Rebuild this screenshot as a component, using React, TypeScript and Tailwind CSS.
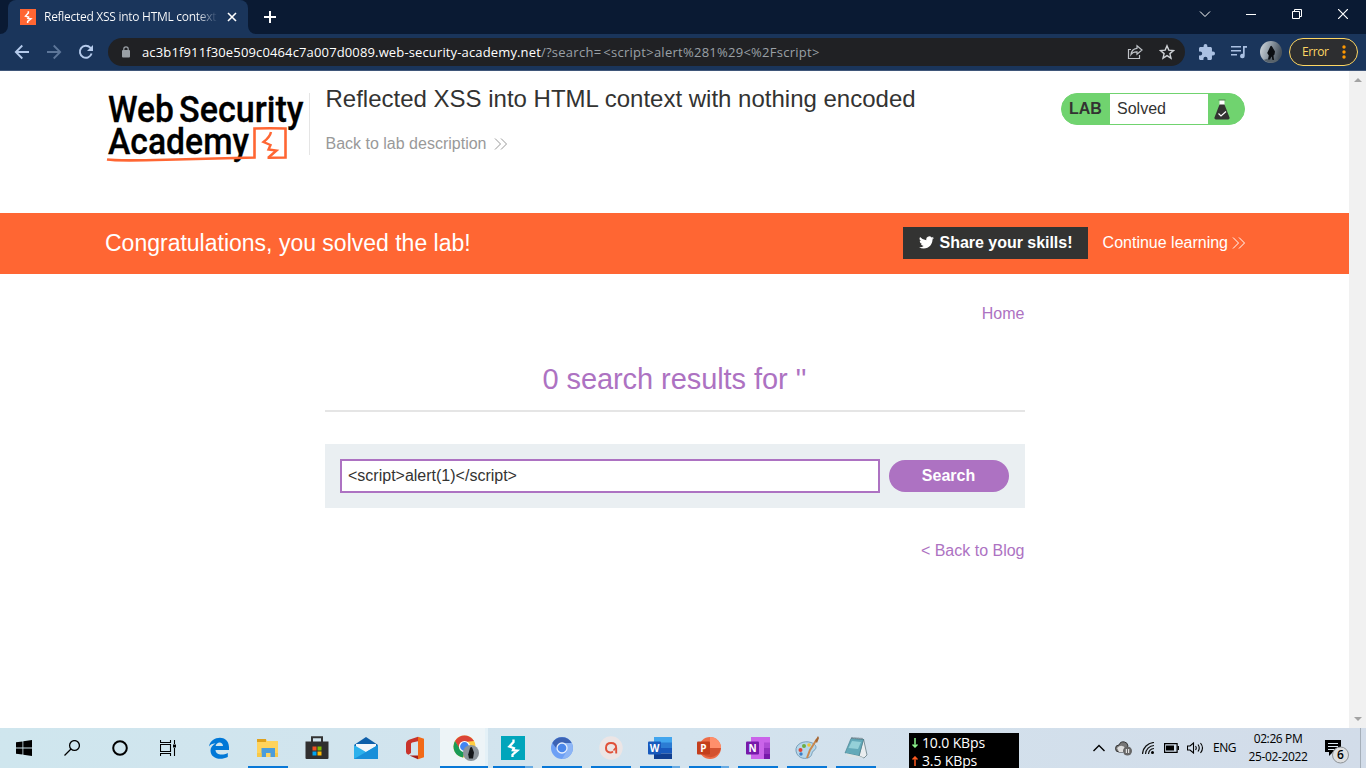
import React from "react";

function Burp({ className, bg }: { className: string; bg: string }) {
  return (
    <svg className={className} viewBox="0 0 24 24">
      <rect width="24" height="24" fill={bg} />
      <path d="M12.500 3.500V6L8.300 10.600l4.600 1.600-1 2 4.400.5-4.800 4V21" fill="none" stroke="#fff" strokeWidth="2.300" />
    </svg>
  );
}

function Chevrons({ className }: { className: string }) {
  return (
    <svg className={className} viewBox="0 0 14 14" fill="none" stroke="currentColor" strokeWidth="1">
      <path d="M1 1.500l5.500 5.500L1 12.500M7 1.500l5.500 5.500L7 12.500" />
    </svg>
  );
}

function Avatar({ className }: { className: string }) {
  return (
    <svg className={className} viewBox="0 0 22 22">
      <defs>
        <linearGradient id="sky" x1="0" x2="1" y1="0" y2="0.3">
          <stop offset="0" stopColor="#d5dce2" />
          <stop offset="0.5" stopColor="#909ba5" />
          <stop offset="1" stopColor="#48535e" />
        </linearGradient>
      </defs>
      <circle cx="11" cy="11" r="11" fill="url(#sky)" />
      <path d="M3.500 19Q11 15.500 18.500 19Q11 24.500 3.500 19z" fill="#59636b" />
      <path d="M9.800 6.500Q11 3 12.700 6.500L15 10.500 14.500 13.500 13.500 14.500 14 19H12.500L11.500 15.500 10 18.500H8L8.800 14.500 7.200 12z" fill="#0b0e12" />
    </svg>
  );
}

function TabStrip() {
  return (
    <div className="flex h-[34px] bg-[#0a1a33] pl-2 text-white">
      <div className="relative flex h-[34px] w-[240px] items-center rounded-t-lg bg-[#1a355b] pl-3">
        <svg className="absolute bottom-0 -left-2 h-2 w-2" viewBox="0 0 8 8"><path d="M8 0v8H0a8 8 0 0 0 8-8" fill="#1a355b" /></svg>
        <svg className="absolute -right-2 bottom-0 h-2 w-2" viewBox="0 0 8 8"><path d="M0 0v8h8a8 8 0 0 1-8-8" fill="#1a355b" /></svg>
        <Burp className="h-4 w-4 shrink-0" bg="#ff6633" />
        <span className="ml-2 w-[174px] overflow-hidden bg-gradient-to-r from-white from-88% to-[#1a355b] bg-clip-text text-[12px] tracking-[-0.28px] whitespace-nowrap text-transparent">
          Reflected XSS into HTML context
        </span>
        <svg className="ml-[9px] h-[10px] w-[10px]" viewBox="0 0 10 10" stroke="#fff" strokeWidth="1.600"><path d="M1 1l8 8M9 1L1 9" /></svg>
      </div>
      <svg className="mt-[11px] ml-4 h-3 w-3" viewBox="0 0 12 12" stroke="#fff" strokeWidth="2"><path d="M6 0v12M0 6h12" /></svg>
      <svg className="mt-[9px] ml-auto h-[10px] w-[12px]" viewBox="0 0 12 10" fill="none" stroke="#fff" strokeWidth="1"><path d="M1 2.500l5 5 5-5" /></svg>
      <svg className="mt-[9px] ml-[35px] h-[10px] w-[10px]" viewBox="0 0 10 10" stroke="#fff"><path d="M0 5.500h10" /></svg>
      <svg className="mt-[9px] ml-[36px] h-[10px] w-[10px]" viewBox="0 0 10 10" fill="none" stroke="#fff"><path d="M.5 2.500h7v7h-7zM2.500 2.500v-2h7v7h-2" /></svg>
      <svg className="mt-[9px] mr-[18px] ml-[36px] h-[10px] w-[10px]" viewBox="0 0 10 10" stroke="#fff" strokeWidth="1.200"><path d="M0 0l10 10M10 0L0 10" /></svg>
    </div>
  );
}

function Toolbar() {
  return (
    <div className="flex h-[37px] items-center border-b border-[#3f5679] bg-[#1a355b] pl-[14px]">
      <svg className="h-4 w-4" viewBox="0 0 16 16" fill="none" stroke="#b5cbec" strokeWidth="1.800"><path d="M15 8H2M8.300 1.500L1.800 8l6.500 6.500" /></svg>
      <svg className="ml-4 h-4 w-4" viewBox="0 0 16 16" fill="none" stroke="#5d7699" strokeWidth="1.800"><path d="M1 8h13M7.700 1.500L14.200 8l-6.500 6.500" /></svg>
      <svg className="ml-4 h-4 w-4" viewBox="0 0 16 16" fill="none" stroke="#b5cbec" strokeWidth="1.900"><path d="M13.600 9.500A6 6 0 1 1 12.300 3.700L14 5.500" /><path d="M15 1v6H9z" fill="#b5cbec" stroke="none" /></svg>
      <div className="ml-[14px] flex h-7 w-[1077px] items-center rounded-full bg-[#202124] pl-[14px]">
        <svg className="h-3 w-2 shrink-0" viewBox="0 0 8 12"><rect y="4" width="8" height="7.500" rx="1" fill="#9aa0a6" /><path d="M1.800 5V3a2.200 2.200 0 0 1 4.400 0v2" fill="none" stroke="#9aa0a6" strokeWidth="1.200" /></svg>
        <span className="ml-3 w-[982px] pt-px text-[13px] whitespace-nowrap text-white">
          <span className="tracking-[0.14px]">ac3b1f911f30e509c0464c7a007d0089.web-security-academy.net</span>
          <span className="tracking-[0.26px] text-[#9aa0a6]">/?search=<span className="ml-[2px]">&lt;script&gt;alert%281%29&lt;%2Fscript&gt;</span></span>
        </span>
        <svg className="ml-[3px] h-4 w-4 shrink-0" viewBox="0 0 16 16" fill="none" stroke="#bfc3c8" strokeWidth="1.200"><path d="M4 5.500H1.500v9h11V11M10 1.800l5 4.200-5 4.200V7.800Q6 7.600 4 10.500 4.500 5 10 4.300z" /></svg>
        <svg className="ml-4 h-4 w-4 shrink-0" viewBox="0 0 16 16" fill="none" stroke="#cfd2d6" strokeWidth="1.400"><path d="M8 1.800l1.800 4.300 4.700.4-3.600 3.100 1.100 4.600L8 11.700l-4 2.500 1.100-4.600L1.500 6.500l4.700-.4z" /></svg>
      </div>
      <svg className="ml-[14px] h-4 w-4" viewBox="2 1 21 21" fill="#aac0e2"><path d="M20.500 11H19V7c0-1.100-.9-2-2-2h-4V3.500a2.500 2.500 0 0 0-5 0V5H4c-1.100 0-2 .9-2 2v3.800h1.500a2.700 2.700 0 0 1 0 5.400H2V20c0 1.100.9 2 2 2h3.800v-1.500a2.700 2.700 0 0 1 5.400 0V22H17c1.100 0 2-.9 2-2v-4h1.500a2.500 2.500 0 0 0 0-5z" /></svg>
      <svg className="ml-4 h-4 w-4" viewBox="0 0 16 16" fill="#aac0e2"><path d="M0 2h10v1.500H0zM0 6h10v1.500H0zM0 10h6v1.500H0zM12 2h4v1.700h-2.300V12a2.300 2.300 0 1 1-1.700-2.200z" /></svg>
      <Avatar className="ml-[13px] h-[22px] w-[22px]" />
      <div className="ml-[7px] flex h-7 w-[69px] items-center rounded-full border border-[#fdd663] bg-[#2d2e30] pl-3 text-[12px] text-[#fdd663]">
        <span className="w-[27px] tracking-[-0.4px]">Error</span>
        <svg className="ml-[13px] h-4 w-1" viewBox="0 0 4 16" fill="#ff9800"><circle cx="2" cy="3" r="1.700" /><circle cx="2" cy="8" r="1.700" /><circle cx="2" cy="13" r="1.700" /></svg>
      </div>
    </div>
  );
}

function AcademyLogo() {
  return (
    <svg className="h-[72px] w-[200px] shrink-0" viewBox="0 0 200 72">
      <g fill="#000" stroke="#000" strokeWidth="0.300" fontFamily="Roboto, sans-serif" fontWeight="500">
        <text x="2" y="30.500" fontSize="37" textLength="66" lengthAdjust="spacingAndGlyphs">Web</text>
        <text x="73" y="30.500" fontSize="37" textLength="124.500" lengthAdjust="spacingAndGlyphs">Security</text>
        <text x="2" y="63" fontSize="36" textLength="141" lengthAdjust="spacingAndGlyphs">Academy</text>
      </g>
      <path d="M1 68.500Q10 70 60 68.800L148.500 66.500V37.500Q164 37 179.500 37.500V66.500L161.500 66.800" fill="none" stroke="#ff6633" strokeWidth="2.600" />
      <path d="M165 41Q164 46 157.500 51L164.500 54 162.500 58.500 170.500 59.500 162.500 66.500" fill="none" stroke="#ff6633" strokeWidth="2.400" />
    </svg>
  );
}

function LabStatus() {
  return (
    <div className="mt-[22px] flex h-8 w-[184px] items-center overflow-hidden rounded-full border border-[#70d36f] bg-[#70d36f] text-[16px] text-[#333332]">
      <span className="w-12 pl-[7px] font-bold">LAB</span>
      <span className="flex h-[30px] w-[98px] items-center bg-white pl-[7px]">Solved</span>
      <svg className="ml-[6px] h-[21px] w-4" viewBox="0 0 16 21">
        <path d="M5.500 1h5v6h-5z" fill="#fff" />
        <path d="M4.500 1h7" stroke="#4d7d4c" />
        <path d="M5.500 5.500h5l5 13q.5 2-1.500 2h-12q-2 0-1.500-2z" fill="#333332" />
        <path d="M4.500 14.500l2.500 2.500 5-4.500" fill="none" stroke="#fff" strokeWidth="1.200" />
      </svg>
    </div>
  );
}

function Page() {
  return (
    <div className="flex h-[657px] bg-white font-['Liberation_Sans',Arial,sans-serif] text-[16px]">
      <main className="w-[1349px]">
        <header className="flex h-[142px] pl-[106px]">
          <div className="flex h-[92px] w-[203px] items-end"><AcademyLogo /></div>
          <div className="mt-[22px] h-[62px] w-px bg-[#e5e5e5]" />
          <div className="w-[736px] pt-[14px] pl-[15.500px]">
            <h2 className="text-[24px] leading-7 whitespace-nowrap text-[#333332]">Reflected XSS into HTML context with nothing encoded</h2>
            <div className="mt-[21px] flex items-center text-[#999]">
              <span className="leading-5">Back to lab description</span>
              <Chevrons className="ml-2 h-[14px] w-[14px]" />
            </div>
          </div>
          <div className="ml-[15px]"><LabStatus /></div>
        </header>
        <section className="flex h-[61px] items-center bg-[#ff6633] pr-[103px] pb-[2px] pl-[105px] text-white">
          <h4 className="text-[23px] leading-7">Congratulations, you solved the lab!</h4>
          <div className="ml-auto flex h-8 w-[185px] items-center bg-[#333332] pl-4 font-bold">
            <svg className="h-[15px] w-[15px]" viewBox="0 2 24 20" fill="#fff"><path d="M23.950 4.600a10 10 0 0 1-2.800.8 4.900 4.900 0 0 0 2.200-2.700c-1 .6-2 1-3.200 1.200a4.900 4.900 0 0 0-8.400 4.500A14 14 0 0 1 1.700 3.200a4.900 4.900 0 0 0 1.500 6.500 4.900 4.900 0 0 1-2.200-.6v.1a4.900 4.900 0 0 0 4 4.800 5 5 0 0 1-2.200.1 4.900 4.900 0 0 0 4.600 3.400A9.900 9.900 0 0 1 0 19.500a14 14 0 0 0 7.600 2.200c9 0 14-7.500 14-14v-.6a10 10 0 0 0 2.400-2.500z" /></svg>
            <span className="ml-[6px] tracking-[-0.03px]">Share your skills!</span>
          </div>
          <span className="ml-[15px] whitespace-nowrap">Continue learning</span>
          <Chevrons className="ml-1 h-[14px] w-[14px]" />
        </section>
        <div className="mx-auto flex w-[700px] flex-col pt-[30px] text-[#ad72c2]">
          <div className="text-right leading-5">Home</div>
          <h1 className="mt-[39px] h-[49px] border-b-2 border-[#e5e5e5] text-center text-[29px] leading-8 tracking-[-0.07px]">0 search results for ''</h1>
          <div className="mt-8 flex h-16 items-center bg-[#eaeff2] px-[15px]">
            <div className="flex h-[34px] w-[540px] items-center border-2 border-[#ad72c2] bg-white pl-[6.500px] text-[#333332]">&lt;script&gt;alert(1)&lt;/script&gt;</div>
            <div className="ml-[9px] flex h-8 w-[120px] items-center justify-center rounded-full bg-[#ad72c2] font-bold text-white">Search</div>
          </div>
          <div className="mt-[33px] text-right leading-5">&lt; Back to Blog</div>
        </div>
      </main>
      <div className="flex w-[17px] flex-col items-center justify-between bg-[#f1f1f1] py-[7px]">
        <svg className="h-1 w-2" viewBox="0 0 8 4" fill="#a3a3a3"><path d="M0 4l4-4 4 4z" /></svg>
        <svg className="h-1 w-2" viewBox="0 0 8 4" fill="#a3a3a3"><path d="M0 0l4 4 4-4z" /></svg>
      </div>
    </div>
  );
}

function Glyph({ children }: { children: React.ReactNode }) {
  return <svg className="h-6 w-6" viewBox="0 0 24 24">{children}</svg>;
}

function Task({ children, bar = "none" }: { children: React.ReactNode; bar?: "none" | "one" | "many" }) {
  return (
    <div className="flex h-10 w-[49px] flex-col items-start pl-1">
      <div className="flex h-[38px] w-10 items-center justify-center pt-[2px]">{children}</div>
      {bar !== "none" && (
        <div className="flex h-[2px] w-10">
          <div className="flex-1 bg-[#0878d7]" />
          {bar === "many" && <div className="w-2 bg-[#65aae3]" />}
        </div>
      )}
    </div>
  );
}

function OfficeTile({ letter, color }: { letter: string; color: string }) {
  return (
    <>
      <rect x="0" y="5.500" width="13" height="13" rx="1" fill={color} />
      <text x="6.500" y="15.700" textAnchor="middle" fill="#fff" fontFamily="Open Sans, sans-serif" fontSize="10" fontWeight="700">{letter}</text>
    </>
  );
}

function Taskbar() {
  return (
    <footer className="flex h-10 bg-gradient-to-r from-[#cfe6ee] via-[#d3e3ee] to-[#d2dce9] text-black">
      <div className="flex w-[195px] items-center">
        <svg className="ml-4 h-4 w-4" viewBox="0 0 16 16"><path d="M0 2.300l6.500-.9v6.200H0zM7.300 1.300L16 0v7.600H7.300zM0 8.400h6.500v6.200L0 13.700zM7.300 8.400H16V16l-8.700-1.300z" /></svg>
        <svg className="ml-8 h-4 w-4" viewBox="0 0 16 16" fill="none" stroke="#000" strokeWidth="1.300"><circle cx="10.500" cy="5.500" r="4.900" /><path d="M7 9L.5 15.500" /></svg>
        <svg className="ml-8 h-4 w-4" viewBox="0 0 16 16" fill="none" stroke="#000" strokeWidth="2"><circle cx="8" cy="8" r="6.800" /></svg>
        <svg className="ml-8 h-4 w-4" viewBox="0 0 16 16" fill="none" stroke="#000" strokeWidth="1.100"><path d="M.5 0v2.500h10V0M.5 16v-2.500h10V16M.5 4.500h10v7H.5zM14.500 0v4M14.500 8v8" /><path d="M13 4.500h3v3h-3z" fill="#000" stroke="none" /></svg>
      </div>
      <Task><svg className="h-[22px] w-[22px]" viewBox="0 0 22 22"><path d="M1 9.500C2.500-1 20.500-3.500 21 10v3H7.500c.4 5.500 7.500 5.500 12.300 3v4C11.500 24 2.500 21 2.500 13.500c0-3 2-5.500 5-7C4.500 6.300 2.500 7.500 1 9.500zM7.600 9H15c0-4.800-6.500-4.800-7.400 0z" fill="#0078d7" /></svg></Task>
      <Task bar="one"><Glyph><path d="M1 3h9l1 2h11v16H1z" fill="#ffd35c" /><path d="M1 3h9v3H1z" fill="#dfa11c" /><path d="M5.500 21v-9h13.500v9h-4.500v-4h-4.500v4z" fill="#4b9ddb" /><path d="M1 17h4.500v4H1zM19 17h3v4h-3z" fill="#f7c848" /></Glyph></Task>
      <Task><Glyph><path d="M7 6V1.200h10V6" fill="none" stroke="#333" strokeWidth="2" /><path d="M.5 5.500h23V22q0 1-1 1h-21q-1 0-1-1z" fill="#302f2f" /><path d="M7.500 10.500h4v4h-4z" fill="#f25022" /><path d="M12.500 10.500h4v4h-4z" fill="#7fba00" /><path d="M7.500 15.500h4v4h-4z" fill="#00a4ef" /><path d="M12.500 15.500h4v4h-4z" fill="#ffb900" /></Glyph></Task>
      <Task><Glyph><path d="M0 9L12 1l12 8v6H0z" fill="#0f5fa9" /><path d="M2 8h20v3L12 18 2 11z" fill="#f4f7fa" /><path d="M0 9l12 7 12-7v14H0z" fill="#2cb1ec" /><path d="M0 23L24 9v14z" fill="#188fd9" /></Glyph></Task>
      <Task><Glyph><path d="M15 .8l6 2v18.400l-6 2z" fill="#f26a17" /><path d="M15 .8L6 3.800Q3 5 3 8v8q0 2 2.500 2.800L8 17V8q0-1 1.200-1.400L15 5.200z" fill="#c9332b" /><path d="M6.500 19.500H15v3.700z" fill="#a51e1a" /></Glyph></Task>
      <div className="flex h-10 w-12 flex-col border-r-[3px] border-[#e4f1f7] bg-[#edf4f7]">
        <div className="flex h-[38px] items-center pt-[2px] pl-[13px]">
          <svg className="h-[26px] w-[26px]" viewBox="0 0 26 26">
            <circle cx="11.500" cy="11.500" r="11" fill="#ffcd40" />
            <path d="M2 6A11 11 0 0 1 21 6l-9.500 1-5 7z" fill="#db4437" />
            <path d="M2 6l5 8 4.500 2.500-1.500 6A11 11 0 0 1 2 6z" fill="#1a9b57" />
            <circle cx="11.500" cy="11.500" r="5" fill="#4285f4" stroke="#fff" strokeWidth="1.200" />
            <circle cx="18" cy="18" r="8" fill="#8b949b" />
            <path d="M17 13q1.500-2 2.500.5l1.500 4-1 6h-4l-.8-4z" fill="#14171a" />
          </svg>
        </div>
        <div className="-mr-[3px] h-[2px] bg-[#0878d7]" />
      </div>
      <div className="flex pl-px">
        <Task bar="many"><Burp className="h-6 w-6" bg="#00a5bb" /></Task>
        <Task bar="one"><svg className="h-[22px] w-[22px]" viewBox="0 0 22 22"><circle cx="11" cy="11" r="11" fill="#6da0f5" /><path d="M1.300 6A11 11 0 0 1 20.700 6H11l-5 6z" fill="#3c63b4" /><path d="M11 22a11 11 0 0 0 9.700-16H14l2 8z" fill="#8db5f5" /><circle cx="11" cy="11" r="5" fill="#4b87ea" stroke="#e6effd" strokeWidth="1.300" /></svg></Task>
        <Task bar="one"><Glyph><circle cx="12" cy="12" r="11.700" fill="#ece5e5" /><path d="M14 15.500c-3.500 2.500-7.300 0-7-4C7.200 8.500 9.500 7 12 7c3.500 0 5.200 2 5.200 5v5.500" fill="none" stroke="#e05038" strokeWidth="1.900" /><path d="M14.500 14.500l2.500-3" stroke="#e05038" strokeWidth="1.500" /></Glyph></Task>
        <Task bar="many"><Glyph><path d="M6 1h18v6H6z" fill="#41a5ee" /><path d="M6 6.500h18V12H6z" fill="#2b7cd3" /><path d="M6 12h18v5.500H6z" fill="#185abd" /><path d="M6 17.500h18V23H6z" fill="#103f91" /><OfficeTile letter="W" color="#185abd" /></Glyph></Task>
        <Task bar="many"><Glyph><circle cx="13" cy="12" r="11" fill="#ed6c47" /><path d="M13 1a11 11 0 0 1 11 11H13z" fill="#ff8f6b" /><path d="M2.300 12H24A11 11 0 0 1 2.300 12z" fill="#d35230" /><OfficeTile letter="P" color="#c43e1c" /></Glyph></Task>
        <Task bar="one"><Glyph><path d="M5 1h19v22H5z" fill="#ca64ea" /><path d="M18 6.500h6V12h-6z" fill="#ae4bd5" /><path d="M18 12h6v5.500h-6z" fill="#9332bf" /><path d="M18 17.500h6V23h-6z" fill="#7719aa" /><OfficeTile letter="N" color="#7719aa" /></Glyph></Task>
        <Task bar="one"><Glyph><path d="M1 15C0 8 9 4 16 6.500c6 2 6 6 3 8-3 1.500-1 5-5 7C8 24 2 21 1 15z" fill="#b6d7eb" stroke="#638eab" strokeWidth=".8" /><circle cx="5.500" cy="14" r="2" fill="#dc4535" /><circle cx="9" cy="10" r="2" fill="#6dae43" /><circle cx="14" cy="9" r="1.800" fill="#efc439" /><circle cx="6" cy="18" r="1.700" fill="#3c7cc5" /><path d="M22 3L15 14l-3 8" stroke="#c9884e" strokeWidth="2" fill="none" /><path d="M20 5l3-5 1 2-2 5z" fill="#a56532" /></Glyph></Task>
        <Task bar="one"><Glyph><path d="M19.500 3l3.500 16-3 3L15 20z" fill="#e9edef" stroke="#536d76" strokeWidth=".7" /><path d="M7 2.500l12.500 1L15 20 1 17z" fill="#63a9b9" stroke="#427a88" strokeWidth=".6" /><path d="M1 17l14 3 5 2-15-1z" fill="#dbe3e5" /><path d="M7.500 1.800l11.500 1" stroke="#52656d" strokeWidth="1.600" strokeDasharray="1 1" /><path d="M8 5l9 1-3 7-9.500-1z" fill="#94d0d8" /></Glyph></Task>
      </div>
      <div className="mt-[5px] ml-[28px] h-[35px] w-[110px] overflow-hidden bg-black text-[14px] leading-[18px] text-white">
        {[{ label: "10.0 KBps", up: false }, { label: "3.5 KBps", up: true }].map(({ label, up }) => (
          <div key={label} className="flex h-[18px] items-center pt-[2px]">
            <svg className="ml-[3px] h-[10px] w-[6px]" viewBox="0 0 6 10" fill="none" stroke={up ? "#ff5a1f" : "#8cf58c"} strokeWidth="1.500"><path d={up ? "M3 10V1M.5 3.500L3 1l2.500 2.500" : "M3 0v9M.5 6.500L3 9l2.500-2.500"} /></svg>
            <span className="ml-[4px] tracking-[-0.13px]">{label}</span>
          </div>
        ))}
      </div>
      <div className="ml-auto flex items-center">
        <svg className="h-3 w-3" viewBox="0 0 12 12" fill="none" stroke="#000" strokeWidth="1.400"><path d="M.5 9L6 3.500 11.500 9" /></svg>
        <svg className="ml-[10px] h-4 w-[17px]" viewBox="0 0 17 16"><path d="M4 12a3.500 3.500 0 0 1 0-7q1.500-4 5.500-3 3 .5 3.500 4l-5 6z" fill="#777" stroke="#333" /><path d="M2 8q5-5 9 1l-2 3H4z" fill="#ddd" /><circle cx="12.500" cy="11" r="4.500" fill="#666" /><path d="M11.300 9v4M13.700 9v4" stroke="#fff" /></svg>
        <svg className="ml-[10px] h-3 w-3" viewBox="0 0 12 12" fill="none" stroke="#111" strokeWidth="1.200"><path d="M.5 12A12 12 0 0 1 12 .5M3.500 12A9 9 0 0 1 12 3.500M6.500 12A6 6 0 0 1 12 6.500" /><circle cx="10.500" cy="10.500" r="1.500" fill="#000" stroke="none" /></svg>
        <svg className="ml-[10px] h-[10px] w-[15px]" viewBox="0 0 15 10"><path d="M.6.600h12.500v8.800H.6z" fill="none" stroke="#000" strokeWidth="1.200" /><path d="M2 2.500h8v5H2zM13.500 3H15v4h-1.500z" /></svg>
        <svg className="ml-[8px] h-3 w-[17px]" viewBox="0 0 17 12" fill="none" stroke="#000" strokeWidth="1.100"><path d="M.5 4h2.500l3.500-3v10L3 8H.5zM8.500 4q1.500 2 0 4M11 2.500q2.500 3.500 0 7M13.500 1q4 5 0 10" /></svg>
        <span className="ml-[9px] w-[23px] text-[12px] tracking-[-0.5px]">ENG</span>
        <div className="ml-[12px] flex w-[60px] flex-col items-center text-[12px] leading-[18px] tracking-[-0.38px] whitespace-nowrap">
          <span>02:26 PM</span><span>25-02-2022</span>
        </div>
        <svg className="mt-[5px] ml-[17px] h-[26px] w-[26px]" viewBox="0 0 26 26"><path d="M0 2h16v12H8l-4 4v-4H0z" /><path d="M3 5.500h10M3 8.500h10M3 11.500h6" stroke="#dce7ef" /><circle cx="15.500" cy="17" r="8" fill="#dedfe0" stroke="#8d9296" /><text x="15.500" y="21.300" textAnchor="middle" fontFamily="Open Sans, sans-serif" fontSize="12" fontWeight="600">6</text></svg>
        <div className="ml-[9px] h-10 w-px bg-[#a5afb9]" />
        <div className="w-[5px]" />
      </div>
    </footer>
  );
}

export default function App() {
  return (
    <div className="flex h-[768px] w-[1366px] flex-col overflow-hidden font-['Open_Sans','Noto_Sans',sans-serif]">
      <TabStrip />
      <Toolbar />
      <Page />
      <Taskbar />
    </div>
  );
}
